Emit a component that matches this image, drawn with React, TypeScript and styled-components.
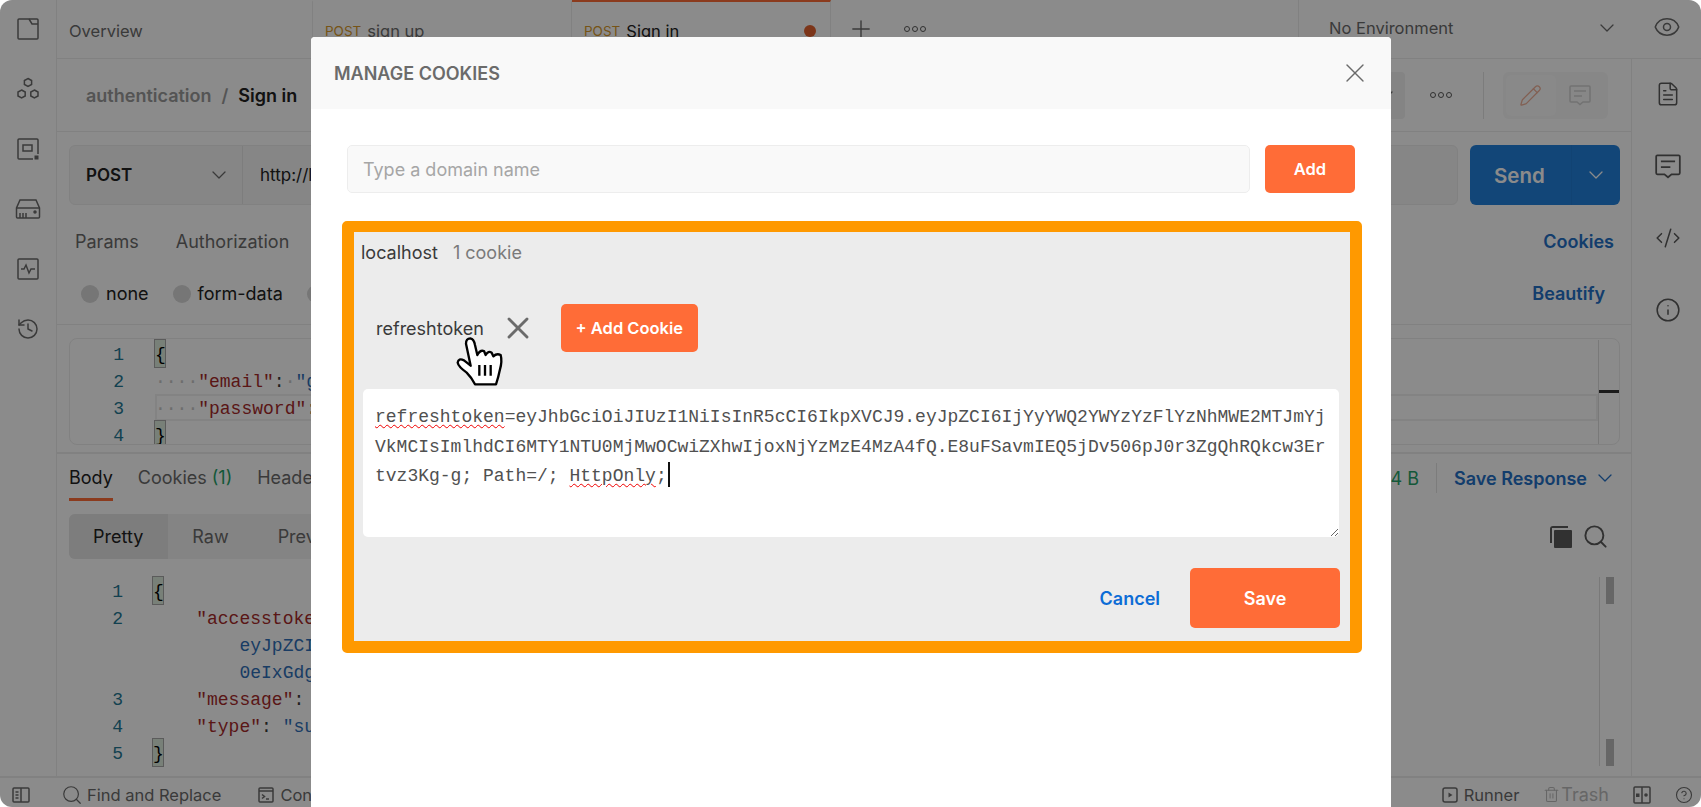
import React from "react";
import styled, { createGlobalStyle } from "styled-components";
import {
  ChevronDown,
  CodeXml,
  Eye,
  FileText,
  History,
  Info,
  CircleHelp,
  Pencil,
  Plus,
  Search,
  Trash2,
  X,
} from "lucide-react";

const GlobalStyle = createGlobalStyle`
  html, body { margin: 0; padding: 0; background: #fff; }
  body { font-family: Inter, "Noto Sans", sans-serif; overflow: hidden; }
  * { box-sizing: border-box; }
`;

const MONO = `"Liberation Mono", "DejaVu Sans Mono", monospace`;

const Shell = styled.div`
  position: relative;
  width: 1701px;
  height: 807px;
  background: #fff;
  border-radius: 12px;
  overflow: hidden;
  display: flex;
  flex-direction: column;
  color: #6b6b6b;
  font-size: 16px;
`;

const Main = styled.div`
  flex: 1;
  display: flex;
  min-height: 0;
`;

const Sidebar = styled.div`
  width: 57px;
  border-right: 1px solid #ededed;
  display: flex;
  flex-direction: column;
  align-items: center;
  padding: 17px 0 0 0;
  gap: 36px;
  color: #6b6b6b;
`;

const Content = styled.div`
  flex: 1;
  display: flex;
  flex-direction: column;
  min-width: 0;
`;

const TopBar = styled.div`
  height: 59px;
  border-bottom: 1px solid #ededed;
  display: flex;
  align-items: stretch;
`;

const Tab = styled.div<{ $w: number; $active?: boolean }>`
  width: ${(p) => p.$w}px;
  padding: 1px 12px 0 12px;
  display: flex;
  align-items: center;
  gap: 6px;
  font-size: 16.5px;
  border-right: 1px solid #ededed;
  border-top: 2px solid ${(p) => (p.$active ? "#ff6c37" : "transparent")};
  color: ${(p) => (p.$active ? "#212121" : "#6b6b6b")};
`;

const Method = styled.span`
  font-size: 13.5px;
  color: #d99a2b;
`;

const UnsavedDot = styled.span`
  width: 12px;
  height: 12px;
  border-radius: 50%;
  background: #e3622f;
  margin-left: auto;
  margin-right: 2px;
`;

const TabTools = styled.div`
  display: flex;
  align-items: center;
  gap: 29px;
  padding-left: 16px;
  color: #6b6b6b;
`;

const Dots = styled.span`
  display: inline-flex;
  gap: 2px;
  & > i {
    width: 6px;
    height: 6px;
    border: 1.3px solid #5a5a5a;
    border-radius: 50%;
  }
`;

const EnvSelect = styled.div`
  margin-left: auto;
  width: 333px;
  border-left: 1px solid #ededed;
  padding: 0 12px 2px 30px;
  display: flex;
  align-items: center;
  justify-content: space-between;
  font-size: 16.5px;
`;

const EyeCell = styled.div`
  width: 70px;
  display: flex;
  align-items: center;
  justify-content: center;
  padding: 0 0 4px 2px;
`;

const Workspace = styled.div`
  flex: 1;
  display: flex;
  min-height: 0;
`;

const Work = styled.div`
  flex: 1;
  display: flex;
  flex-direction: column;
  min-width: 0;
`;

const RightRail = styled.div`
  width: 70px;
  border-left: 1px solid #ededed;
  display: flex;
  flex-direction: column;
  align-items: center;
  padding: 22px 0 0 2px;
  gap: 46px;
  color: #5a5a5a;
`;

const BreadcrumbRow = styled.div`
  height: 73px;
  border-bottom: 1px solid #ededed;
  padding: 0 23px 0 29px;
  display: flex;
  align-items: center;
  justify-content: space-between;
`;

const Crumbs = styled.div`
  display: flex;
  gap: 10px;
  font-size: 18px;
  font-weight: 600;
  color: #9a9a9a;
`;

const CrumbCurrent = styled.span`
  color: #212121;
`;

const HeadActions = styled.div`
  display: flex;
  align-items: center;
  height: 47px;
`;

const SaveStub = styled.div`
  width: 40px;
  height: 47px;
  background: #f2f2f2;
  border-radius: 4px;
  margin-right: 25px;
  display: flex;
  align-items: center;
  justify-content: flex-end;
  padding-right: 7px;
`;

const VLine = styled.span<{ $h: number; $ml: number; $mr: number }>`
  width: 1px;
  height: ${(p) => p.$h}px;
  margin: 0 ${(p) => p.$mr}px 0 ${(p) => p.$ml}px;
  background: #e4e4e4;
`;

const ModeGroup = styled.div`
  display: flex;
  width: 105px;
  height: 47px;
  border-radius: 6px;
  background: #f7f7f7;
  padding: 3px;
`;

const ModeCell = styled.div<{ $active?: boolean }>`
  flex: 1;
  display: flex;
  align-items: center;
  justify-content: center;
  border-radius: 5px;
  background: ${(p) => (p.$active ? "#fbfbfb" : "transparent")};
  color: ${(p) => (p.$active ? "#eeb098" : "#d2d2d2")};
`;

const UrlRow = styled.div`
  display: flex;
  gap: 12px;
  margin: 13px 11px 0 12px;
  height: 60px;
`;

const UrlBox = styled.div`
  flex: 1;
  display: flex;
  background: #f6f6f6;
  border: 1px solid #ededed;
  border-radius: 6px;
  align-items: stretch;
`;

const MethodSelect = styled.div`
  width: 173px;
  border-right: 1px solid #e6e6e6;
  padding: 0 11px 0 16px;
  display: flex;
  align-items: center;
  justify-content: space-between;
  font-weight: 600;
  font-size: 17px;
  color: #212121;
`;

const UrlText = styled.div`
  padding-left: 17px;
  display: flex;
  align-items: center;
  font-size: 17px;
  color: #212121;
`;

const SendButton = styled.div`
  width: 150px;
  background: #2280dc;
  border-radius: 6px;
  display: flex;
  color: #fff;
  font-weight: 600;
  font-size: 20.5px;
`;

const SendLabel = styled.div`
  flex: 1;
  display: flex;
  align-items: center;
  padding-left: 24px;
  border-right: 1px solid #207bd4;
`;

const SendCaret = styled.div`
  width: 48px;
  display: flex;
  align-items: center;
  justify-content: center;
`;

const LinkText = styled.span`
  color: #2470c7;
  font-weight: 600;
  font-size: 18px;
`;

const ReqTabs = styled.div`
  height: 72px;
  display: flex;
  align-items: center;
  padding: 0 17px 0 18px;
  gap: 37px;
  font-size: 18px;
  & > :last-child {
    margin-left: auto;
  }
`;

const BodyOptions = styled.div`
  height: 48px;
  padding: 0 26px 14px 24px;
  border-bottom: 1px solid #ededed;
  display: flex;
  align-items: center;
  gap: 24px;
  font-size: 18px;
  & > :last-child {
    margin-left: auto;
  }
`;

const Radio = styled.label`
  display: flex;
  align-items: center;
  gap: 7px;
  color: #212121;
  &::before {
    content: "";
    width: 18px;
    height: 18px;
    border-radius: 50%;
    background: #d8d8d8;
  }
`;

const Editor = styled.div`
  margin: 13px 11px 0 12px;
  height: 107px;
  border: 1px solid #ededed;
  border-radius: 8px;
  padding-top: 1px;
  display: flex;
  overflow: hidden;
`;

const CodeLines = styled.div`
  flex: 1;
  min-width: 0;
  font-family: ${MONO};
  font-size: 18px;
  color: #3a3a3a;
`;

const Line = styled.div<{ $active?: boolean; $gutter: number }>`
  height: 27px;
  line-height: 31px;
  display: flex;
  white-space: pre;
  & > b {
    font-weight: 400;
    flex: 1;
    margin-left: ${(p) => p.$gutter}px;
    ${(p) => p.$active && "box-shadow: inset 0 0 0 2px #f1f1f1;"}
  }
`;

const LineNo = styled.span`
  width: 54px;
  text-align: right;
  color: #237893;
`;

const Brace = styled.span`
  display: inline-block;
  width: 10px;
  height: 27px;
  vertical-align: top;
  background: #dcebdc;
  outline: 1px solid #a8a8a8;
  color: #000;
`;

const Key = styled.span`
  color: #a52a2a;
`;
const Str = styled.span`
  color: #2f6fb8;
`;
const Ws = styled.span`
  color: #c8c8c8;
`;

const Minimap = styled.div<{ $spread?: boolean }>`
  width: 21px;
  border-left: 1px solid #dedede;
  display: flex;
  flex-direction: column;
  justify-content: ${(p) => (p.$spread ? "space-between" : "flex-start")};
  align-items: ${(p) => (p.$spread ? "center" : "stretch")};
`;

const MapTick = styled.i`
  height: 3px;
  margin-top: 50px;
  background: #333;
`;

const MapThumb = styled.i`
  width: 8px;
  height: 27px;
  background: #bbb;
`;

const Splitter = styled.div`
  margin-top: 7px;
  height: 2px;
  background: #ededed;
`;

const ResHead = styled.div`
  height: 48px;
  display: flex;
  align-items: stretch;
  padding: 0 14px 0 12px;
  gap: 25px;
  font-size: 18px;
`;

const ResTab = styled.span<{ $active?: boolean }>`
  display: flex;
  align-items: center;
  gap: 5px;
  color: ${(p) => (p.$active ? "#212121" : "#6b6b6b")};
  border-bottom: 3px solid ${(p) => (p.$active ? "#ff6c37" : "transparent")};
  padding-top: 2px;
  height: 47px;
`;

const Green = styled.span`
  color: #26a269;
`;

const ResRight = styled.div`
  margin-left: auto;
  display: flex;
  align-items: center;
  color: #26a269;
`;

const FormatRow = styled.div`
  margin-top: 12px;
  height: 45px;
  padding: 0 22px 0 12px;
  display: flex;
  align-items: center;
  justify-content: space-between;
`;

const Segments = styled.div`
  display: flex;
  height: 45px;
  width: 400px;
  background: #f2f2f2;
  border-radius: 6px;
  overflow: hidden;
  font-size: 18px;
`;

const Segment = styled.div<{ $active?: boolean }>`
  padding: 0 25px 0 24px;
  display: flex;
  align-items: center;
  color: ${(p) => (p.$active ? "#212121" : "#6b6b6b")};
  background: ${(p) => (p.$active ? "#e6e6e6" : "transparent")};
`;

const ToolIcons = styled.div`
  display: flex;
  gap: 10px;
  align-items: center;
  color: #5a5a5a;
`;

const ResCode = styled.div`
  flex: 1;
  margin: 18px 11px 10px 12px;
  display: flex;
  min-height: 0;
`;

const StatusBar = styled.div`
  height: 31px;
  border-top: 2px solid #ededed;
  display: flex;
  align-items: center;
  padding: 4px 8px 0 12px;
  font-size: 16.5px;
  color: #6b6b6b;
`;

const StatusItem = styled.span<{ $gap?: number; $muted?: boolean; $fs?: number }>`
  display: flex;
  align-items: center;
  gap: ${(p) => p.$gap ?? 6}px;
  color: ${(p) => (p.$muted ? "#bcbcbc" : "inherit")};
  font-size: ${(p) => p.$fs ?? 16.5}px;
`;

const StatusLeft = styled.div`
  display: flex;
  align-items: center;
  gap: 31px;
  & > :last-child {
    margin-left: 6px;
  }
`;

const StatusRight = styled.div`
  margin-left: auto;
  display: flex;
  align-items: center;
  gap: 24px;
`;

/* dimmed layer + dialog */
const Backdrop = styled.div`
  position: absolute;
  inset: 0;
  background: rgba(0, 0, 0, 0.455);
  display: flex;
  padding: 37px 0 0 311px;
`;

const Modal = styled.div`
  width: 1080px;
  height: 770px;
  background: #fff;
  border-radius: 4px 4px 0 0;
  overflow: hidden;
`;

const ModalHead = styled.div`
  height: 72px;
  background: #f9f9f9;
  padding: 0 20px 0 23px;
  display: flex;
  align-items: center;
  justify-content: space-between;
  font-size: 18px;
  font-weight: 600;
  color: #6b6b6b;
`;

const ModalBody = styled.div`
  padding: 36px 36px 0;
`;

const DomainRow = styled.div`
  display: flex;
  gap: 15px;
  height: 48px;
`;

const DomainInput = styled.div`
  flex: 1;
  background: #f9f9f9;
  border: 1px solid #ededed;
  border-radius: 5px;
  display: flex;
  align-items: center;
  padding: 1px 0 0 15px;
  font-size: 18px;
  color: #a6a6a6;
`;

const OrangeButton = styled.div<{ $w: number; $h: number; $fs?: number }>`
  width: ${(p) => p.$w}px;
  height: ${(p) => p.$h}px;
  background: #ff6c37;
  color: #fff;
  border-radius: 5px;
  font-weight: 600;
  font-size: ${(p) => p.$fs ?? 16.5}px;
  display: flex;
  align-items: center;
  justify-content: center;
`;

const CookieBox = styled.div`
  position: relative;
  margin: 28px -7px 0 -5px;
  height: 432px;
  background: #ececec;
  border: solid #ff9900;
  border-width: 11px 12px 12px 12px;
  border-radius: 5px;
  padding: 0 11px 0 9px;
`;

const DomainHead = styled.div`
  height: 41px;
  margin-left: -2px;
  display: flex;
  align-items: center;
  gap: 15px;
  font-size: 18px;
  color: #3a3a3a;
`;

const Count = styled.span`
  color: #7a7a7a;
`;

const CookieRow = styled.div`
  margin-top: 31px;
  height: 48px;
  display: flex;
  align-items: center;
  padding-left: 13px;
  font-size: 18px;
  color: #3a3a3a;
`;

const CookieDelete = styled.span`
  display: flex;
  margin: 0 25px 0 16px;
  color: #6b6b6b;
`;

const ValueBox = styled.div`
  margin-top: 37px;
  height: 148px;
  background: #fff;
  border-radius: 5px;
  padding: 14px 12px;
  font-family: ${MONO};
  font-size: 18px;
  line-height: 29.5px;
  color: #505050;
  word-break: break-all;
  resize: both;
  overflow: hidden;
`;

const Wavy = styled.span`
  text-decoration: underline wavy #f00000 1.4px;
  text-underline-offset: 2px;
`;

const Caret = styled.span`
  display: inline-block;
  width: 2px;
  height: 25px;
  margin-left: 1px;
  background: #111;
  vertical-align: -6px;
`;

const Footer = styled.div`
  margin: 31px -1px 0 0;
  display: flex;
  align-items: center;
  justify-content: flex-end;
  gap: 30px;
`;

const Cancel = styled.span`
  color: #0d6cd6;
  font-weight: 600;
  font-size: 18px;
`;

const HandCursor = styled.svg`
  position: absolute;
  left: 101px;
  top: 104px;
  width: 50px;
  height: 50px;
`;

const Glyph = styled.svg`
  fill: none;
  stroke: currentColor;
  stroke-width: 1.5;
  display: block;
`;

const CollectionsIcon = () => (
  <Glyph width={24} height={24} viewBox="0 0 24 24">
    <path d="M3 2h18a1 1 0 0 1 1 1v18a1 1 0 0 1-1 1H3a1 1 0 0 1-1-1V3a1 1 0 0 1 1-1z" />
    <path d="M13 2l3 5h6" />
  </Glyph>
);

const ApisIcon = () => (
  <Glyph width={24} height={24} viewBox="0 0 24 24">
    <path d="M12 1.5l3.6 2v4l-3.6 2-3.6-2v-4z" />
    <path d="M5.6 13l3.6 2v4l-3.6 2-3.6-2v-4z" />
    <path d="M18.4 13l3.6 2v4l-3.6 2-3.6-2v-4z" />
  </Glyph>
);

const EnvIcon = () => (
  <Glyph width={24} height={24} viewBox="0 0 24 24">
    <path d="M22 17V3a1 1 0 0 0-1-1H3a1 1 0 0 0-1 1v18a1 1 0 0 0 1 1h14" />
    <rect x="7" y="8" width="9" height="6" />
    <rect x="18.5" y="18.5" width="4" height="4" fill="currentColor" stroke="none" />
  </Glyph>
);

const MockIcon = () => (
  <Glyph width={26} height={24} viewBox="0 0 26 24">
    <path d="M5 3h16l3.500 8v9a1 1 0 0 1-1 1h-21a1 1 0 0 1-1-1v-9z" />
    <path d="M1.500 11h23" />
    <path d="M5 21v-5M8 21v-5M11 21v-5" />
    <circle cx="20" cy="15" r="1" fill="currentColor" />
  </Glyph>
);

const MonitorIcon = () => (
  <Glyph width={24} height={24} viewBox="0 0 24 24">
    <rect x="2" y="2" width="20" height="20" rx="1" />
    <path d="M5 12h3l2-4 3 8 2-4h4" />
  </Glyph>
);

const CommentIcon = ({ size = 22 }: { size?: number }) => (
  <Glyph width={size} height={size} viewBox="0 0 22 22">
    <path d="M2 2h18a1 1 0 0 1 1 1v14a1 1 0 0 1-1 1h-6l-3 2.500L8 18H2a1 1 0 0 1-1-1V3a1 1 0 0 1 1-1z" />
    <path d="M5 7h12M5 12h8" />
  </Glyph>
);

const PanelIcon = () => (
  <Glyph width={18} height={16} viewBox="0 0 18 16">
    <rect x="1" y="1" width="16" height="14" rx="1" />
    <path d="M9 1v14M3.500 5h3M3.500 8h3M3.500 11h3" />
  </Glyph>
);

const ConsoleIcon = () => (
  <Glyph width={16} height={16} viewBox="0 0 16 16">
    <rect x="1" y="1" width="14" height="14" rx="1" />
    <path d="M1 4h14M4 7.500l2.500 2L4 11.500M8 12h3" />
  </Glyph>
);

const RunnerIcon = () => (
  <Glyph width={16} height={16} viewBox="0 0 16 16">
    <rect x="1" y="1" width="14" height="14" rx="2" />
    <path d="M6.500 5.500l4 2.500-4 2.500z" fill="currentColor" stroke="none" />
  </Glyph>
);

const TwoPaneIcon = () => (
  <Glyph width={18} height={18} viewBox="0 0 18 18">
    <rect x="1" y="1" width="16" height="16" rx="1" />
    <path d="M9 1v16" />
    <rect x="3" y="7.500" width="3.500" height="3.500" fill="currentColor" stroke="none" />
    <circle cx="13" cy="9" r="1.800" fill="currentColor" stroke="none" />
  </Glyph>
);

const CopyIcon = () => (
  <Glyph width={22} height={22} viewBox="0 0 22 22" style={{ fill: "currentColor", stroke: "none" }}>
    <path d="M3 0h15v2H2v15H0V3a3 3 0 0 1 3-3z" />
    <rect x="4" y="4" width="18" height="18" rx="1" />
  </Glyph>
);

const Hand = () => (
  <HandCursor viewBox="345 345 150 150">
    <path
      d="M378 368Q378 352 391 352Q402 354 405 372L412 402Q420 386 432 390L437 402Q445 388 455 395L460 406Q470 396 482 402Q487 420 480 445Q475 470 468 490L405 490Q395 470 380 455Q355 437 353 425Q355 410 372 418L392 434Z"
      fill="#fff"
      stroke="#000"
      strokeWidth="7"
      strokeLinejoin="round"
    />
    <path d="M418 432v32M435 432v32M452 432v32" stroke="#000" strokeWidth="7" fill="none" />
  </HandCursor>
);

const App: React.FC = () => (
  <>
    <GlobalStyle />
    <Shell>
      <Main>
        <Sidebar>
          <CollectionsIcon />
          <ApisIcon />
          <EnvIcon />
          <MockIcon />
          <MonitorIcon />
          <History size={24} strokeWidth={1.5} />
        </Sidebar>
        <Content>
          <TopBar>
            <Tab $w={256}>Overview</Tab>
            <Tab $w={259}>
              <Method>POST</Method> sign up
            </Tab>
            <Tab $w={259} $active>
              <Method>POST</Method> Sign in
              <UnsavedDot />
            </Tab>
            <TabTools>
              <Plus size={28} strokeWidth={1.2} />
              <Dots>
                <i />
                <i />
                <i />
              </Dots>
            </TabTools>
            <EnvSelect>
              No Environment
              <ChevronDown size={24} strokeWidth={1.3} />
            </EnvSelect>
            <EyeCell>
              <Eye size={28} strokeWidth={1.3} />
            </EyeCell>
          </TopBar>
          <Workspace>
            <Work>
              <BreadcrumbRow>
                <Crumbs>
                  <span>authentication</span>
                  <span>/</span>
                  <CrumbCurrent>Sign in</CrumbCurrent>
                </Crumbs>
                <HeadActions>
                  <SaveStub>
                    <ChevronDown size={24} strokeWidth={1.3} />
                  </SaveStub>
                  <Dots>
                    <i />
                    <i />
                    <i />
                  </Dots>
                  <VLine $h={47} $ml={31} $mr={19} />
                  <ModeGroup>
                    <ModeCell $active>
                      <Pencil size={23} strokeWidth={1.3} />
                    </ModeCell>
                    <ModeCell>
                      <CommentIcon />
                    </ModeCell>
                  </ModeGroup>
                </HeadActions>
              </BreadcrumbRow>

              <UrlRow>
                <UrlBox>
                  <MethodSelect>
                    POST
                    <ChevronDown size={24} strokeWidth={1.3} color="#6b6b6b" />
                  </MethodSelect>
                  <UrlText>http://localhost:3000/auth/signin</UrlText>
                </UrlBox>
                <SendButton>
                  <SendLabel>Send</SendLabel>
                  <SendCaret>
                    <ChevronDown size={24} strokeWidth={1.3} />
                  </SendCaret>
                </SendButton>
              </UrlRow>

              <ReqTabs>
                <span>Params</span>
                <span>Authorization</span>
                <LinkText>Cookies</LinkText>
              </ReqTabs>
              <BodyOptions>
                <Radio>none</Radio>
                <Radio>form-data</Radio>
                <Radio />
                <LinkText>Beautify</LinkText>
              </BodyOptions>

              <Editor>
                <CodeLines>
                  <Line $gutter={31}>
                    <LineNo>1</LineNo>
                    <b>
                      <Brace>{"{"}</Brace>
                    </b>
                  </Line>
                  <Line $gutter={31}>
                    <LineNo>2</LineNo>
                    <b>
                      <Ws>····</Ws>
                      <Key>"email"</Key>:<Ws>·</Ws>
                      <Str>"g</Str>
                    </b>
                  </Line>
                  <Line $gutter={31} $active>
                    <LineNo>3</LineNo>
                    <b>
                      <Ws>····</Ws>
                      <Key>"password"</Key>:
                    </b>
                  </Line>
                  <Line $gutter={31}>
                    <LineNo>4</LineNo>
                    <b>
                      <Brace>{"}"}</Brace>
                    </b>
                  </Line>
                </CodeLines>
                <Minimap>
                  <MapTick />
                </Minimap>
              </Editor>

              <Splitter />

              <ResHead>
                <ResTab $active>Body</ResTab>
                <ResTab>
                  Cookies <Green>(1)</Green>
                </ResTab>
                <ResTab>Headers</ResTab>
                <ResRight>
                  94 B
                  <VLine $h={30} $ml={17} $mr={17} />
                  <LinkText>Save Response</LinkText>
                  <ChevronDown size={24} strokeWidth={1.3} color="#2470c7" style={{ marginLeft: 6 }} />
                </ResRight>
              </ResHead>

              <FormatRow>
                <Segments>
                  <Segment $active>Pretty</Segment>
                  <Segment>Raw</Segment>
                  <Segment>Preview</Segment>
                </Segments>
                <ToolIcons>
                  <CopyIcon />
                  <Search size={27} strokeWidth={1.7} />
                </ToolIcons>
              </FormatRow>

              <ResCode>
                <CodeLines>
                  <Line $gutter={30}>
                    <LineNo>1</LineNo>
                    <b>
                      <Brace>{"{"}</Brace>
                    </b>
                  </Line>
                  <Line $gutter={30}>
                    <LineNo>2</LineNo>
                    <b>
                      {"    "}
                      <Key>"accesstoken"</Key>:
                    </b>
                  </Line>
                  <Line $gutter={30}>
                    <LineNo> </LineNo>
                    <b>
                      {"        "}
                      <Str>eyJpZCI6</Str>
                    </b>
                  </Line>
                  <Line $gutter={30}>
                    <LineNo> </LineNo>
                    <b>
                      {"        "}
                      <Str>0eIxGdg</Str>
                    </b>
                  </Line>
                  <Line $gutter={30}>
                    <LineNo>3</LineNo>
                    <b>
                      {"    "}
                      <Key>"message"</Key>:
                    </b>
                  </Line>
                  <Line $gutter={30}>
                    <LineNo>4</LineNo>
                    <b>
                      {"    "}
                      <Key>"type"</Key>: <Str>"success"</Str>
                    </b>
                  </Line>
                  <Line $gutter={30}>
                    <LineNo>5</LineNo>
                    <b>
                      <Brace>{"}"}</Brace>
                    </b>
                  </Line>
                </CodeLines>
                <Minimap $spread>
                  <MapThumb />
                  <MapThumb />
                </Minimap>
              </ResCode>
            </Work>
            <RightRail>
              <FileText size={26} strokeWidth={1.4} />
              <CommentIcon size={26} />
              <CodeXml size={26} strokeWidth={1.4} />
              <Info size={26} strokeWidth={1.4} />
            </RightRail>
          </Workspace>
        </Content>
      </Main>

      <StatusBar>
        <StatusLeft>
          <StatusItem>
            <PanelIcon />
          </StatusItem>
          <StatusItem $gap={4}>
            <Search size={22} strokeWidth={1.3} />
            Find and Replace
          </StatusItem>
          <StatusItem>
            <ConsoleIcon />
            Console
          </StatusItem>
        </StatusLeft>
        <StatusRight>
          <StatusItem>
            <RunnerIcon />
            Runner
          </StatusItem>
          <StatusItem $muted $gap={1} $fs={18}>
            <Trash2 size={17} strokeWidth={1.5} />
            Trash
          </StatusItem>
          <TwoPaneIcon />
          <CircleHelp size={18} strokeWidth={1.5} />
        </StatusRight>
      </StatusBar>

      <Backdrop>
        <Modal>
          <ModalHead>
            MANAGE COOKIES
            <X size={32} strokeWidth={1} />
          </ModalHead>
          <ModalBody>
            <DomainRow>
              <DomainInput>Type a domain name</DomainInput>
              <OrangeButton $w={90} $h={48}>
                Add
              </OrangeButton>
            </DomainRow>
            <CookieBox>
              <DomainHead>
                <span>localhost</span>
                <Count>1 cookie</Count>
              </DomainHead>
              <CookieRow>
                refreshtoken
                <CookieDelete>
                  <X size={36} strokeWidth={1.9} />
                </CookieDelete>
                <OrangeButton $w={137} $h={48}>
                  + Add Cookie
                </OrangeButton>
              </CookieRow>
              <Hand />
              <ValueBox>
                <Wavy>refreshtoken</Wavy>
                =eyJhbGciOiJIUzI1NiIsInR5cCI6IkpXVCJ9.eyJpZCI6IjYyYWQ2YWYzYzFlYzNhMWE2MTJmYjVkMCIsImlhdCI6MTY1NTU0MjMwOCwiZXhwIjoxNjYzMzE4MzA4fQ.E8uFSavmIEQ5jDv506pJ0r3ZgQhRQkcw3Ertvz3Kg-g; Path=/;{" "}
                <Wavy>HttpOnly</Wavy>;
                <Caret />
              </ValueBox>
              <Footer>
                <Cancel>Cancel</Cancel>
                <OrangeButton $w={150} $h={60} $fs={18}>
                  Save
                </OrangeButton>
              </Footer>
            </CookieBox>
          </ModalBody>
        </Modal>
      </Backdrop>
    </Shell>
  </>
);

export default App;
